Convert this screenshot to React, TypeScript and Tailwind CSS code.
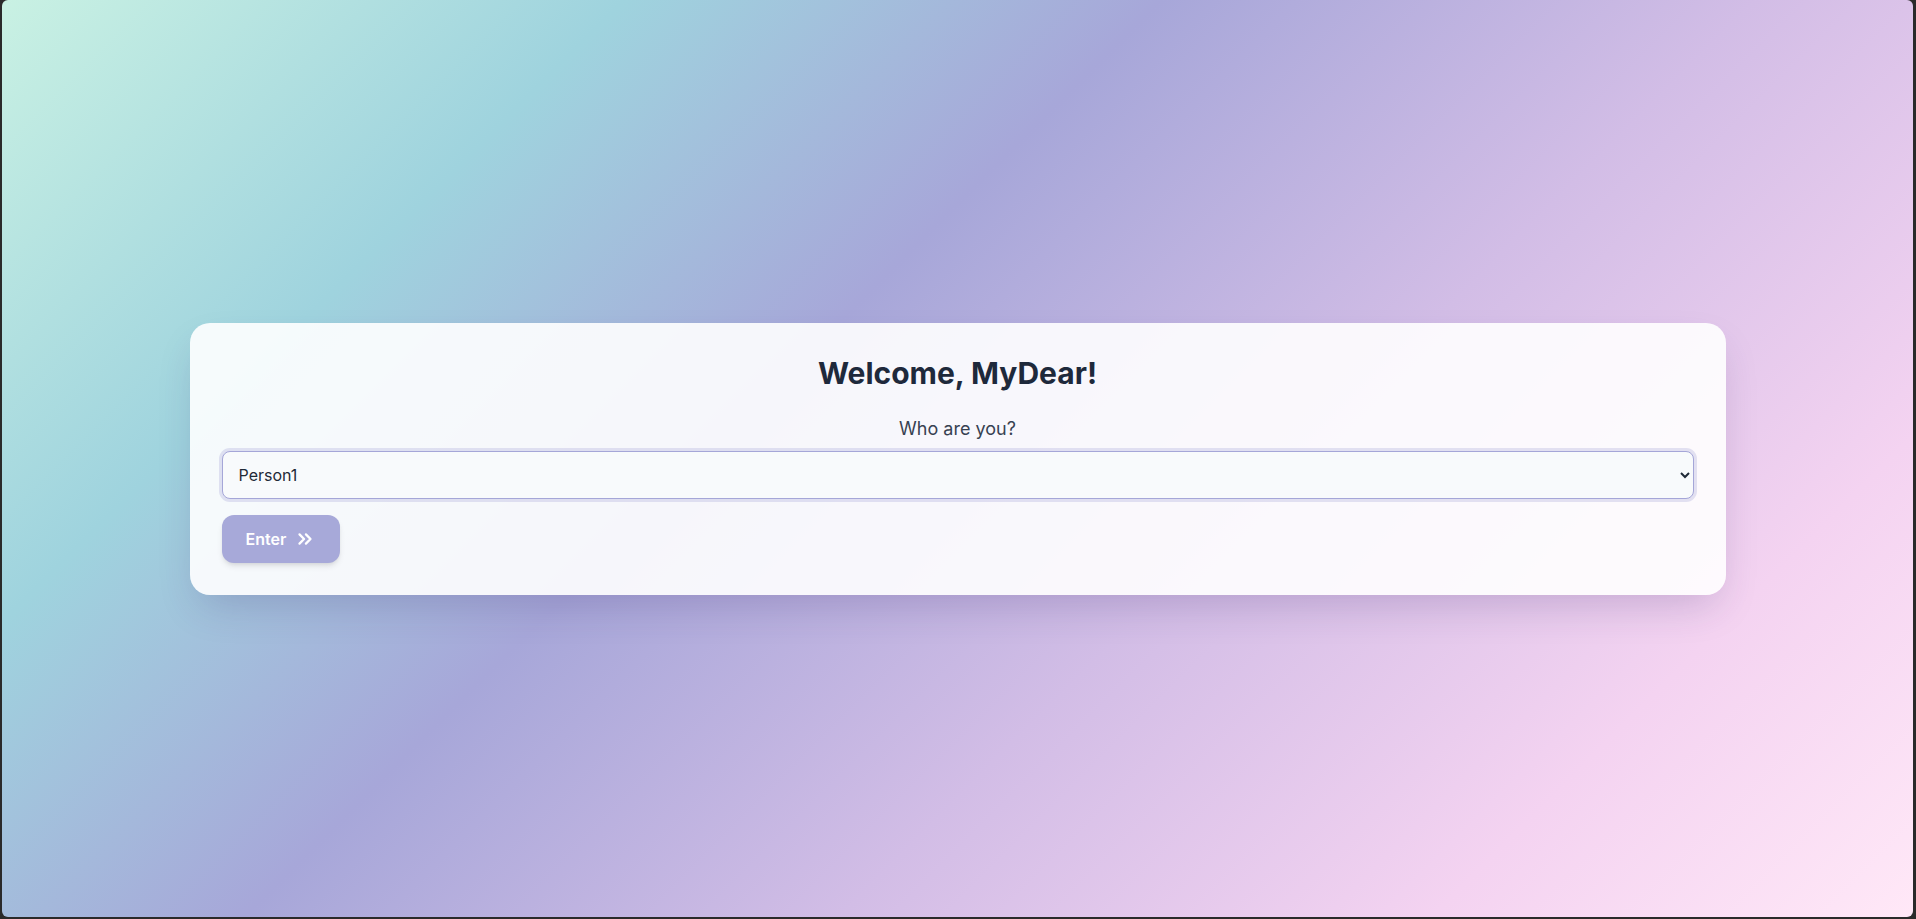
import React from "react";
import { ChevronsRight } from "lucide-react";

export default function App() {
  return (
    <div className="w-full h-[919px] bg-[#2a2a2a] pl-[2px] pr-[3px] pb-[2px]" style={{ fontFamily: "Inter, 'Noto Sans', sans-serif" }}>
      <div className="h-full w-full rounded-[6px] overflow-hidden bg-[linear-gradient(135deg,#c9f1e3_0%,#9fd3de_22%,#a7a7d9_41%,#d2bde6_62%,#f4d3f1_83%,#ffe8f7_100%)] flex items-center justify-center">
        <div className="w-[1536px] rounded-[20px] bg-white/90 shadow-[0_18px_40px_-10px_rgba(60,40,110,0.22)] p-8 flex flex-col">
          <h1 className="text-center text-3xl font-bold text-[#1e293b] mb-6">Welcome, MyDear!</h1>
          <label className="text-center text-lg text-[#374151] mb-2">Who are you?</label>
          <select
            defaultValue="Person1"
            className="h-12 w-full rounded-lg border border-[#a5a6d8] ring-[3px] ring-[#a5a6d8]/30 bg-[#f8fafc] pl-3 pr-2 text-base text-[#1f2937] outline-none"
          >
            <option>Person1</option>
            <option>Person2</option>
          </select>
          <div className="mt-4">
            <button className="h-12 px-6 rounded-xl bg-[#a7a9d9] text-white font-semibold text-base shadow-md flex items-center gap-2">
              Enter
              <ChevronsRight size={22} strokeWidth={2.5} />
            </button>
          </div>
        </div>
      </div>
    </div>
  );
}
